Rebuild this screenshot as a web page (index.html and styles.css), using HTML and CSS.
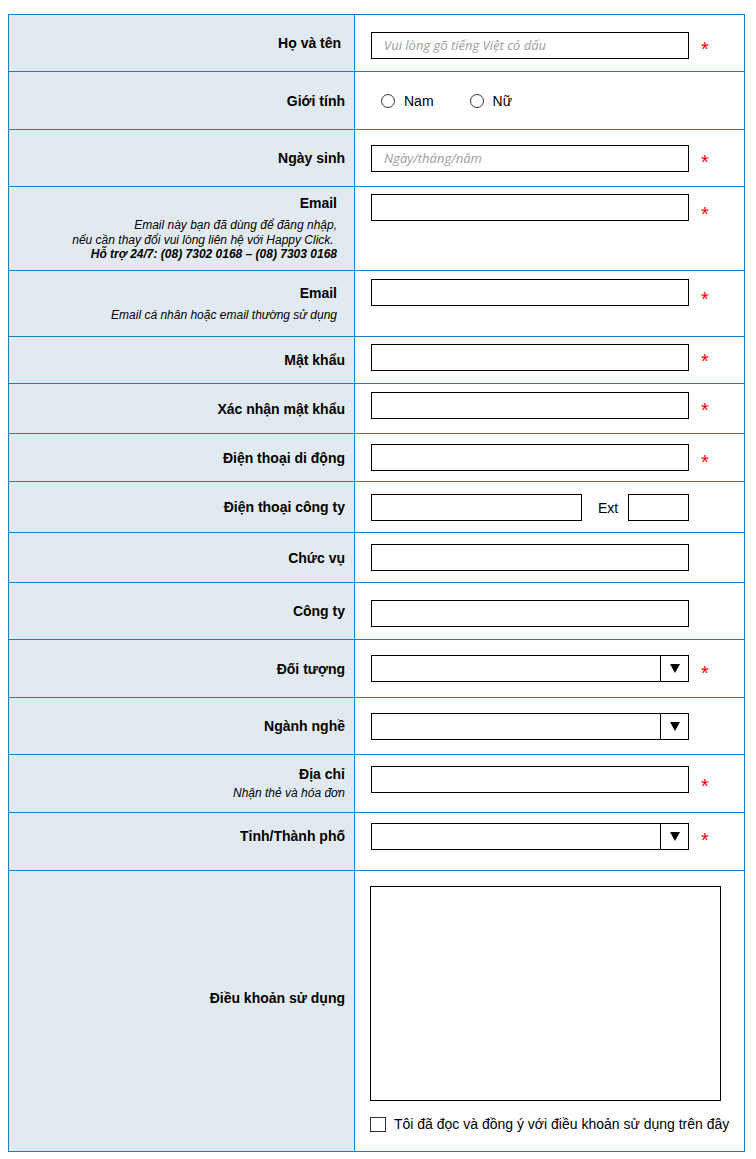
FILE: index.html
```html
<!DOCTYPE html>
<html lang="vi">

<head>
    <meta charset="UTF-8">
    <title>Đăng ký thành viên</title>

    <link rel="stylesheet" href="styles.css">
</head>

<body>

    <form class="register">

        <div class="label">Họ và tên&nbsp;</div>
        <div class="field down">
            <input type="text" class="text" placeholder="Vui lòng gõ tiếng Việt có dấu">
            <span class="req">*</span>
        </div>

        <div class="label">Giới tính</div>
        <div class="field">
            <label class="choice"><input type="radio" name="gioitinh"> Nam</label>
            <label class="choice"><input type="radio" name="gioitinh"> Nữ</label>
        </div>

        <div class="label">Ngày sinh</div>
        <div class="field">
            <input type="text" class="text" placeholder="Ngày/tháng/năm">
            <span class="req">*</span>
        </div>

        <div class="label email">
            <strong>Email</strong>
            <p class="note">Email này bạn đã dùng để đăng nhập,<br>
                nếu cần thay đổi vui lòng liên hệ với Happy Click.&nbsp;<br>
                <b>Hỗ trợ 24/7: (08) 7302 0168 – (08) 7303 0168</b></p>
        </div>
        <div class="field top">
            <input type="email" class="text">
            <span class="req">*</span>
        </div>

        <div class="label email">
            <strong>Email</strong>
            <p class="note">Email cá nhân hoặc email thường sử dụng</p>
        </div>
        <div class="field top second">
            <input type="email" class="text">
            <span class="req">*</span>
        </div>

        <div class="label">Mật khẩu</div>
        <div class="field up">
            <input type="password" class="text">
            <span class="req">*</span>
        </div>

        <div class="label">Xác nhận mật khẩu</div>
        <div class="field up">
            <input type="password" class="text">
            <span class="req">*</span>
        </div>

        <div class="label">Điện thoại di động</div>
        <div class="field">
            <input type="text" class="text">
            <span class="req">*</span>
        </div>

        <div class="label">Điện thoại công ty</div>
        <div class="field">
            <input type="text" class="text phone">
            <span class="ext">Ext</span>
            <input type="text" class="text short">
        </div>

        <div class="label">Chức vụ</div>
        <div class="field">
            <input type="text" class="text">
        </div>

        <div class="label">Công ty</div>
        <div class="field down">
            <input type="text" class="text">
        </div>

        <div class="label">Đối tượng</div>
        <div class="field">
            <div class="select"><span class="value"></span><span class="arrow"></span></div>
            <span class="req">*</span>
        </div>

        <div class="label">Ngành nghề</div>
        <div class="field">
            <div class="select"><span class="value"></span><span class="arrow"></span></div>
        </div>

        <div class="label">
            <strong>Địa chỉ</strong>
            <p class="note tight">Nhận thẻ và hóa đơn</p>
        </div>
        <div class="field top address">
            <input type="text" class="text">
            <span class="req">*</span>
        </div>

        <div class="label lift">Tỉnh/Thành phố</div>
        <div class="field lift">
            <div class="select"><span class="value"></span><span class="arrow"></span></div>
            <span class="req">*</span>
        </div>

        <div class="label terms-label">Điều khoản sử dụng</div>
        <div class="field terms">
            <textarea></textarea>
            <label class="agree"><input type="checkbox"> Tôi đã đọc và đồng ý với điều khoản sử dụng trên đây</label>
        </div>

    </form>

</body>

</html>
```

FILE: styles.css
```css
* {
    box-sizing: border-box;
}

body {
    margin: 0;
    padding: 14px 8px;
    font-family: "Liberation Sans", Arial, sans-serif;
    font-size: 14px;
    color: #000;
    background-color: white;
}

.register {
    display: grid;
    grid-template-columns: 346px 390px;
    grid-template-rows: 57px 58px 57px 84px 66px 47px 50px 48px 51px 50px 57px 58px 57px 58px 58px 281px;
    width: 737px;
    border-top: 1px solid #1a7fc2;
    border-left: 1px solid #1a7fc2;
}

.label,
.field {
    border-right: 1px solid #1a7fc2;
    border-bottom: 1px solid #1a7fc2;
}

.label {
    display: flex;
    flex-direction: column;
    justify-content: center;
    align-items: flex-end;
    padding-right: 9px;
    background-color: #e2eaf1;
    font-weight: bold;
    text-align: right;
    line-height: 16px;
}

.label.email {
    padding-right: 17px;
}

.label.lift,
.field.lift {
    padding-bottom: 11px;
}

.label.terms-label {
    padding-bottom: 26px;
}

.note {
    margin: 7px 0 0 0;
    font-size: 12px;
    font-weight: normal;
    font-style: italic;
    line-height: 14.5px;
}

.note.tight {
    margin-top: 4px;
}

.field {
    display: flex;
    align-items: center;
    padding-left: 16px;
}

.field.down {
    padding-top: 4px;
}

.field.up {
    padding-bottom: 6px;
}

.field.top {
    align-items: flex-start;
    padding-top: 7px;
}

.field.second {
    padding-top: 8px;
}

.field.address {
    padding-top: 11px;
}

/* inputs */

.text {
    width: 318px;
    height: 27px;
    margin: 0;
    padding: 0 12px;
    border: 1px solid #000;
    border-radius: 0;
    font-family: "Open Sans", sans-serif;
    font-size: 13px;
    outline: none;
}

.text::placeholder {
    color: #9c9c9c;
    font-style: italic;
}

.text.phone {
    width: 211px;
}

.text.short {
    width: 61px;
}

.ext {
    margin: 2px 10px 0 16px;
}

.req {
    margin: 8px 0 0 12px;
    color: #ff0000;
    font-size: 20px;
    line-height: 20px;
}

.field.top .req {
    margin-top: 10px;
}

.select {
    display: flex;
    width: 318px;
    height: 27px;
    border: 1px solid #000;
}

.select .value {
    flex: 1;
}

.select .arrow {
    display: flex;
    justify-content: center;
    align-items: center;
    width: 28px;
    border-left: 1px solid #000;
}

.select .arrow::after {
    content: "";
    border-left: 5px solid transparent;
    border-right: 5px solid transparent;
    border-top: 9px solid #000;
}

.choice {
    display: flex;
    align-items: center;
    gap: 9px;
    margin-left: 10px;
    margin-right: 26px;
}

input[type="radio"],
input[type="checkbox"] {
    appearance: none;
    margin: 0;
    border: 1px solid #333;
}

input[type="radio"] {
    width: 14px;
    height: 14px;
    border-radius: 50%;
}

input[type="checkbox"] {
    width: 16px;
    height: 15px;
}

.field.terms {
    flex-direction: column;
    align-items: flex-start;
    padding-top: 15px;
    padding-left: 15px;
}

textarea {
    width: 351px;
    height: 215px;
    margin: 0;
    border: 1px solid #000;
    border-radius: 0;
    resize: none;
}

.agree {
    display: flex;
    align-items: center;
    gap: 8px;
    margin-top: 15px;
}
```
